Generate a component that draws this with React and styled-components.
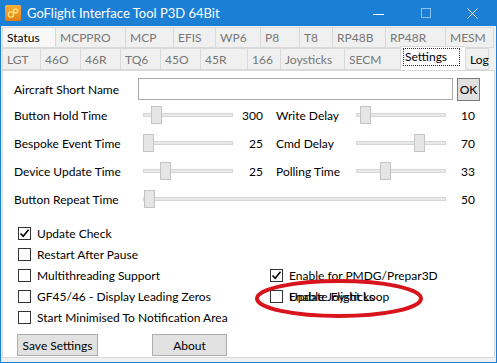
import React from "react";
import styled, { createGlobalStyle } from "styled-components";

const Global = createGlobalStyle`
  html, body { margin: 0; padding: 0; background: #ffffff; }
  body {
    font-family: Lato, "Noto Sans", sans-serif;
    font-size: 12px;
    color: #000;
  }
`;

const Window = styled.div`
  width: 497px;
  height: 363px;
  box-sizing: border-box;
  border: 1px solid #1c7fd6;
  border-top: none;
  background: #f0f0f0;
  display: flex;
  flex-direction: column;
`;

const TitleBar = styled.div`
  height: 26px;
  background: #1c7fd6;
  display: flex;
  align-items: center;
  color: #fff;
  padding-left: 4px;
  flex-shrink: 0;
`;

const Title = styled.div`
  margin-left: 6px;
  font-size: 13px;
  flex: 1;
`;

const WinButton = styled.div`
  width: 47px;
  height: 26px;
  display: flex;
  align-items: center;
  justify-content: center;
`;

const Tabs = styled.div`
  padding: 1px 0 0 1px;
  display: flex;
  flex-direction: column;
`;

const TabRow = styled.div`
  display: flex;
  height: ${(p) => p.$h}px;
  align-items: flex-end;
`;

const Tab = styled.div`
  width: ${(p) => p.$w}px;
  height: ${(p) => (p.$sel ? p.$h + 2 : p.$h)}px;
  margin-top: ${(p) => (p.$sel ? -2 : 0)}px;
  box-sizing: border-box;
  border: 1px solid #d9d9d9;
  border-right: none;
  border-bottom: ${(p) => (p.$sel ? "none" : "1px solid #d9d9d9")};
  background: ${(p) => (p.$sel ? "#ffffff" : p.$hi ? "#f8f8f8" : "#f0f0f0")};
  color: ${(p) => (p.$dim ? "#777777" : "#000")};
  padding-left: 4px;
  display: flex;
  align-items: center;
  white-space: nowrap;
  position: relative;
  z-index: ${(p) => (p.$sel ? 2 : 1)};
  &:last-child { border-right: 1px solid #d9d9d9; }
`;

const Focus = styled.span`
  border: 1px dotted #333;
  padding: 0 12px 1px 1px;
  margin-left: -2px;
  margin-top: -3px;
`;

const Panel = styled.div`
  position: relative;
  margin: 0 1px 0 1px;
  height: 288px;
  background: #fff;
  border: 1px solid #d9d9d9;
  box-sizing: border-box;
  padding: 6px 0 0 11px;
`;

const NameRow = styled.div`
  display: flex;
  align-items: center;
  height: 24px;
`;

const Label = styled.div`
  width: ${(p) => p.$w}px;
  flex-shrink: 0;
  white-space: nowrap;
`;

const TextBox = styled.div`
  width: 315px;
  height: 22px;
  box-sizing: border-box;
  border: 1px solid #a9a9a9;
  background: #fff;
`;

const SmallButton = styled.div`
  margin-left: 4px;
  width: 23px;
  height: 23px;
  box-sizing: border-box;
  border: 1px solid #7a7a7a;
  background: #e1e1e1;
  display: flex;
  align-items: center;
  justify-content: center;
`;

const SliderRow = styled.div`
  display: flex;
  align-items: center;
  height: 28px;
`;

const Slider = styled.div`
  position: relative;
  width: ${(p) => p.$w}px;
  height: 28px;
  flex-shrink: 0;
  display: flex;
  align-items: center;
`;

const Track = styled.div`
  width: 100%;
  height: 4px;
  box-sizing: border-box;
  background: #e7eaea;
  border: 1px solid #d6d6d6;
`;

const Thumb = styled.div`
  position: absolute;
  top: 5px;
  width: 11px;
  height: 18px;
  box-sizing: border-box;
  background: #e5e5e5;
  border: 1px solid #c4c4c4;
`;

const Value = styled.div`
  width: ${(p) => p.$w}px;
  text-align: right;
  flex-shrink: 0;
  margin-right: ${(p) => p.$mr || 0}px;
`;

const Options = styled.div`
  margin-top: 10px;
  display: grid;
  grid-template-columns: 252px 1fr;
  grid-auto-rows: 21px;
  padding-left: 4px;
`;

const Option = styled.div`
  grid-column: ${(p) => p.$col};
  grid-row: ${(p) => p.$row};
  display: flex;
  align-items: center;
  position: relative;
  white-space: nowrap;
`;

const Box = styled.div`
  width: 13px;
  height: 13px;
  box-sizing: border-box;
  border: 1px solid #333;
  background: #fff;
  margin-right: 6px;
  display: flex;
  align-items: center;
  justify-content: center;
  flex-shrink: 0;
`;

const Overlap = styled.span`
  position: absolute;
  left: 19px;
  top: 3px;
`;

const Buttons = styled.div`
  display: flex;
  margin-top: 6px;
  padding-left: 3px;
  gap: 54px;
`;

const Button = styled.div`
  width: ${(p) => p.$w}px;
  height: 22px;
  box-sizing: border-box;
  border: 1px solid #adadad;
  background: #e1e1e1;
  display: flex;
  align-items: center;
  justify-content: center;
`;

const Ring = styled.svg`
  position: absolute;
  left: 252px;
  top: 208px;
  overflow: visible;
`;

const row1 = [
  ["Status", 53, false, true],
  ["MCPPRO", 70, true],
  ["MCP", 48, true],
  ["EFIS", 42, true],
  ["WP6", 45, true],
  ["P8", 39, true],
  ["T8", 33, true],
  ["RP48B", 53, true],
  ["RP48R", 60, true],
  ["MESM", 49, true],
];

const row2 = [
  ["LGT", 38, true],
  ["46O", 40, true],
  ["46R", 40, true],
  ["TQ6", 40, true],
  ["45O", 40, true],
  ["45R", 47, true],
  ["166", 33, true],
  ["Joysticks", 64, true],
  ["SECM", 56, true],
  ["Settings", 65, false, false, true],
  ["Log", 24, false],
];

const Check = ({ on }) => (
  <Box>
    {on && (
      <svg width="11" height="11" viewBox="0 0 11 11">
        <path d="M1.5 5.5 L4.2 8.3 L9.5 1.8" fill="none" stroke="#000" strokeWidth="1.6" />
      </svg>
    )}
  </Box>
);

const SliderBox = ({ w, pos }) => (
  <Slider $w={w}>
    <Track />
    <Thumb style={{ left: pos }} />
  </Slider>
);

export default function App() {
  return (
    <>
      <Global />
      <Window>
        <TitleBar>
          <svg width="16" height="16" viewBox="0 0 16 16">
            <defs>
              <linearGradient id="ig" x1="0" y1="0" x2="0" y2="1">
                <stop offset="0" stopColor="#f7b23b" />
                <stop offset="1" stopColor="#e07d10" />
              </linearGradient>
            </defs>
            <rect x="0" y="0" width="16" height="16" rx="1.5" fill="url(#ig)" />
            <circle cx="6" cy="9.5" r="2.6" fill="none" stroke="#ffe27a" strokeWidth="1.4" />
            <circle cx="10.5" cy="6" r="2" fill="none" stroke="#ffe27a" strokeWidth="1.3" />
          </svg>
          <Title>GoFlight Interface Tool P3D 64Bit</Title>
          <WinButton>
            <svg width="11" height="11"><path d="M0 6.5 H11" stroke="#fff" strokeWidth="1" /></svg>
          </WinButton>
          <WinButton>
            <svg width="10" height="10"><rect x="0.5" y="0.5" width="9" height="9" fill="none" stroke="#8ec2ee" /></svg>
          </WinButton>
          <WinButton>
            <svg width="11" height="11"><path d="M0.5 0.5 L10.5 10.5 M10.5 0.5 L0.5 10.5" stroke="#fff" strokeWidth="1" /></svg>
          </WinButton>
        </TitleBar>
        <Tabs>
          <TabRow $h={21}>
            {row1.map(([t, w, dim, hi]) => (
              <Tab key={t} $w={w} $h={21} $dim={dim} $hi={hi}>{t}</Tab>
            ))}
          </TabRow>
          <TabRow $h={22}>
            {row2.map(([t, w, dim, hi, sel]) => (
              <Tab key={t} $w={w} $h={22} $dim={dim} $sel={sel}>
                {sel ? <Focus>{t}</Focus> : t}
              </Tab>
            ))}
          </TabRow>
        </Tabs>
        <Panel>
          <NameRow>
            <Label $w={124}>Aircraft Short Name</Label>
            <TextBox />
            <SmallButton>OK</SmallButton>
          </NameRow>
          <SliderRow>
            <Label $w={129}>Button Hold Time</Label>
            <SliderBox w={90} pos={8} />
            <Value $w={30} $mr={13}>300</Value>
            <Label $w={80}>Write Delay</Label>
            <SliderBox w={90} pos={4} />
            <Value $w={29}>10</Value>
          </SliderRow>
          <SliderRow>
            <Label $w={129}>Bespoke Event Time</Label>
            <SliderBox w={90} pos={0} />
            <Value $w={30} $mr={13}>25</Value>
            <Label $w={80}>Cmd Delay</Label>
            <SliderBox w={90} pos={58} />
            <Value $w={29}>70</Value>
          </SliderRow>
          <SliderRow>
            <Label $w={129}>Device Update Time</Label>
            <SliderBox w={90} pos={17} />
            <Value $w={30} $mr={13}>25</Value>
            <Label $w={80}>Polling Time</Label>
            <SliderBox w={90} pos={24} />
            <Value $w={29}>33</Value>
          </SliderRow>
          <SliderRow>
            <Label $w={129}>Button Repeat Time</Label>
            <SliderBox w={303} pos={1} />
            <Value $w={29}>50</Value>
          </SliderRow>
          <Options>
            <Option $col={1} $row={1}><Check on />Update Check</Option>
            <Option $col={1} $row={2}><Check />Restart After Pause</Option>
            <Option $col={1} $row={3}><Check />Multithreading Support</Option>
            <Option $col={1} $row={4}><Check />GF45/46 - Display Leading Zeros</Option>
            <Option $col={1} $row={5}><Check />Start Minimised To Notification Area</Option>
            <Option $col={2} $row={3}><Check on />Enable for PMDG/Prepar3D</Option>
            <Option $col={2} $row={4}>
              <Check />Update Flight Loop
              <Overlap>Enable Joysticks</Overlap>
            </Option>
          </Options>
          <Buttons>
            <Button $w={81}>Save Settings</Button>
            <Button $w={75}>About</Button>
          </Buttons>
          <Ring width="168" height="39" viewBox="0 0 168 39">
            <ellipse cx="84" cy="19.5" rx="82" ry="17.5" fill="none" stroke="#d8141c" strokeWidth="4" />
          </Ring>
        </Panel>
      </Window>
    </>
  );
}
